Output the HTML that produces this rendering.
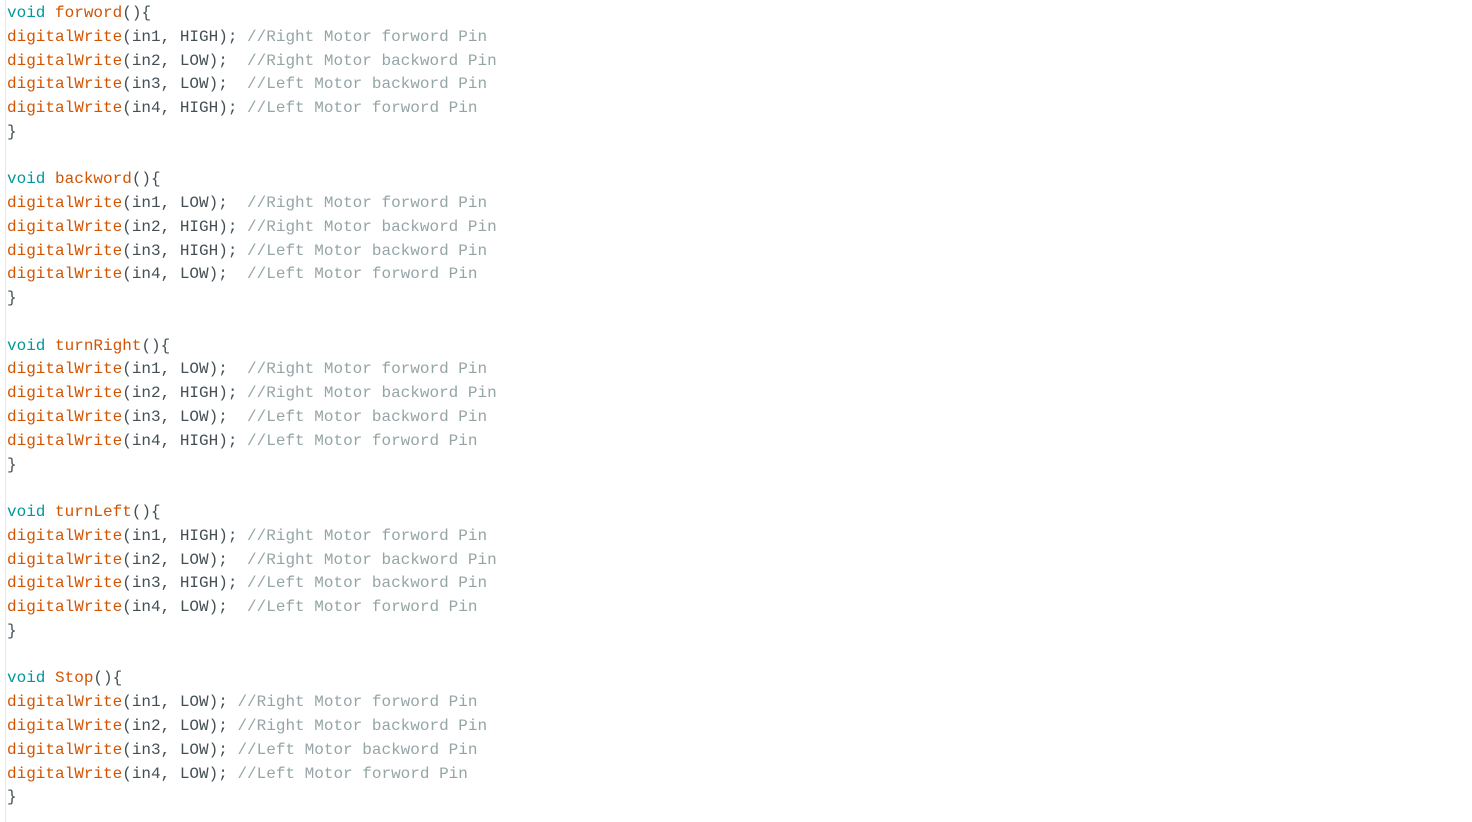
<!DOCTYPE html>
<html><head><style>
html,body{margin:0;padding:0;background:#fff;width:1472px;height:822px;overflow:hidden}
.b{position:absolute;left:5px;top:0;width:1px;height:822px;background:#e8e8e8}
pre{position:absolute;left:7px;top:2px;margin:0;font-family:"Liberation Mono",monospace;font-size:16px;line-height:23.76px;color:#434f54}
.k{color:#00979c}.f{color:#d35400}.c{color:#95a5a6}
</style></head><body><div class="b"></div>
<pre><span class="k">void</span> <span class="f">forword</span>(){
<span class="f">digitalWrite</span>(in1, HIGH); <span class="c">//Right Motor forword Pin</span>
<span class="f">digitalWrite</span>(in2, LOW);  <span class="c">//Right Motor backword Pin</span>
<span class="f">digitalWrite</span>(in3, LOW);  <span class="c">//Left Motor backword Pin</span>
<span class="f">digitalWrite</span>(in4, HIGH); <span class="c">//Left Motor forword Pin</span>
}

<span class="k">void</span> <span class="f">backword</span>(){
<span class="f">digitalWrite</span>(in1, LOW);  <span class="c">//Right Motor forword Pin</span>
<span class="f">digitalWrite</span>(in2, HIGH); <span class="c">//Right Motor backword Pin</span>
<span class="f">digitalWrite</span>(in3, HIGH); <span class="c">//Left Motor backword Pin</span>
<span class="f">digitalWrite</span>(in4, LOW);  <span class="c">//Left Motor forword Pin</span>
}

<span class="k">void</span> <span class="f">turnRight</span>(){
<span class="f">digitalWrite</span>(in1, LOW);  <span class="c">//Right Motor forword Pin</span>
<span class="f">digitalWrite</span>(in2, HIGH); <span class="c">//Right Motor backword Pin</span>
<span class="f">digitalWrite</span>(in3, LOW);  <span class="c">//Left Motor backword Pin</span>
<span class="f">digitalWrite</span>(in4, HIGH); <span class="c">//Left Motor forword Pin</span>
}

<span class="k">void</span> <span class="f">turnLeft</span>(){
<span class="f">digitalWrite</span>(in1, HIGH); <span class="c">//Right Motor forword Pin</span>
<span class="f">digitalWrite</span>(in2, LOW);  <span class="c">//Right Motor backword Pin</span>
<span class="f">digitalWrite</span>(in3, HIGH); <span class="c">//Left Motor backword Pin</span>
<span class="f">digitalWrite</span>(in4, LOW);  <span class="c">//Left Motor forword Pin</span>
}

<span class="k">void</span> <span class="f">Stop</span>(){
<span class="f">digitalWrite</span>(in1, LOW); <span class="c">//Right Motor forword Pin</span>
<span class="f">digitalWrite</span>(in2, LOW); <span class="c">//Right Motor backword Pin</span>
<span class="f">digitalWrite</span>(in3, LOW); <span class="c">//Left Motor backword Pin</span>
<span class="f">digitalWrite</span>(in4, LOW); <span class="c">//Left Motor forword Pin</span>
}</pre>
</body></html>
